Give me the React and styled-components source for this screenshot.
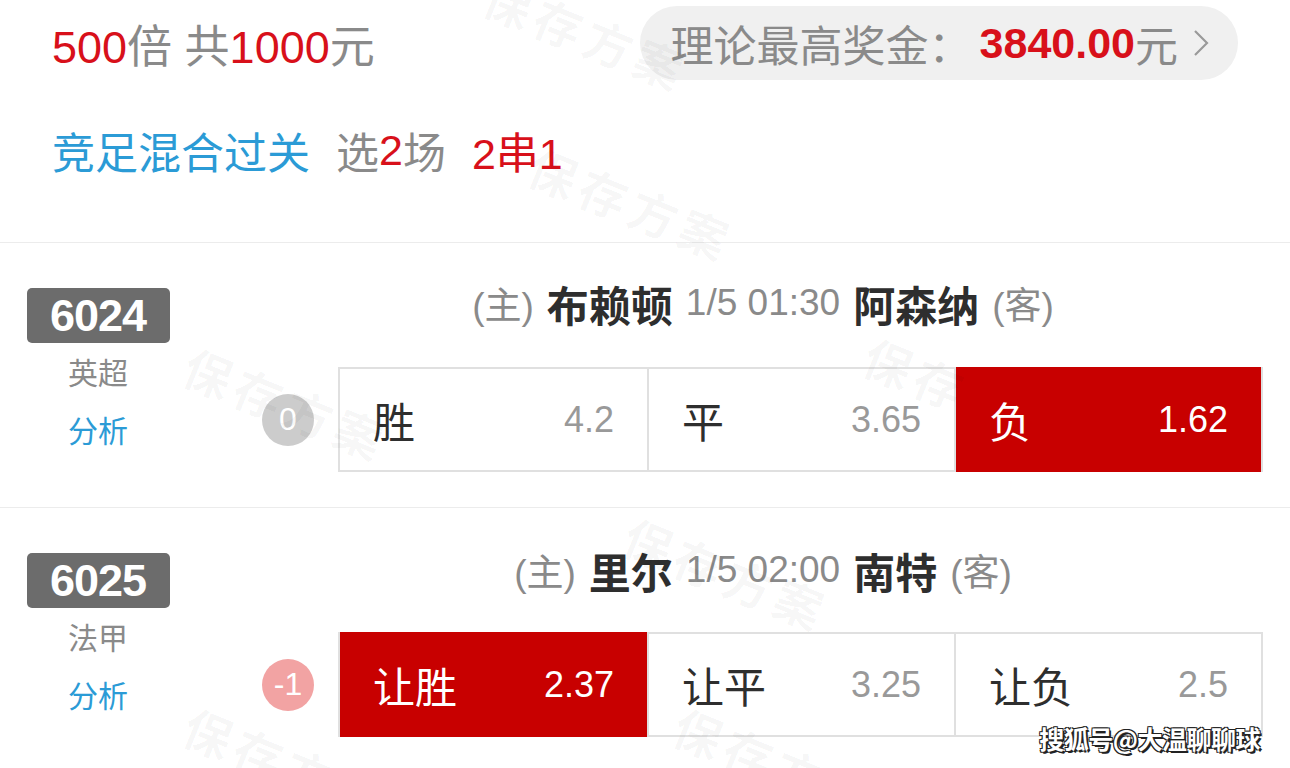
import React from 'react'
import styled, { createGlobalStyle } from 'styled-components'

const RED = '#d8101a'
const SEL = '#c80000'
const BLUE = '#2b9bd6'
const GRAY = '#8a8a8a'
const DARK = '#2e2e2e'

const GlobalStyle = createGlobalStyle`
	html, body {
		margin: 0;
		padding: 0;
		background: #fff;
	}
	body {
		font-family: 'Liberation Sans', 'Noto Sans CJK SC', sans-serif;
		color: ${DARK};
	}
`

const Page = styled.div`
	position: relative;
	width: 1290px;
	height: 768px;
	overflow: hidden;
	background: #fff;
`

const Header = styled.div`
	padding: 6px 52px 0 52px;
	border-bottom: 1px solid #ececec;
	height: 236px;
`

const TopRow = styled.div`
	display: flex;
	align-items: center;
	justify-content: space-between;
	height: 74px;
`

const Amount = styled.div`
	font-size: 45px;
	color: ${GRAY};
`

const Red = styled.span`
	color: ${RED};
	font-weight: ${({ bold }) => (bold ? 700 : 400)};
	margin-left: ${({ gap }) => gap || 0}px;
`

const Pill = styled.div`
	display: flex;
	align-items: center;
	height: 74px;
	padding: 0 28px 0 31px;
	border-radius: 37px;
	background: #f0f0f0;
	font-size: 43px;
	color: ${GRAY};
`

const Colon = styled.span`
	margin-right: 8px;
`

const Chevron = styled.svg`
	margin-left: 14px;
	width: 18px;
	height: 30px;
`

const PlayRow = styled.div`
	display: flex;
	align-items: center;
	height: 52px;
	margin-top: 44px;
	font-size: 43px;
	color: ${GRAY};
`

const Blue = styled.span`
	color: ${BLUE};
	margin-right: ${({ gap }) => gap || 0}px;
`

const Match = styled.div`
	display: flex;
	align-items: flex-start;
	padding: ${({ top }) => top}px 27px 35px 0;
	border-bottom: 1px solid #ececec;
`

const Side = styled.div`
	display: flex;
	flex-direction: column;
	align-items: center;
	width: 196px;
	padding-top: ${({ offset }) => offset}px;
`

const Badge = styled.div`
	width: 143px;
	height: 55px;
	border-radius: 5px;
	background: #6c6c6c;
	color: #fff;
	font-size: 45px;
	font-weight: 700;
	letter-spacing: -1px;
	display: flex;
	align-items: center;
	justify-content: center;
`

const League = styled.div`
	margin-top: 3px;
	height: 55px;
	line-height: 55px;
	font-size: 30px;
	color: ${({ link }) => (link ? BLUE : GRAY)};
`

const Main = styled.div`
	flex: 1;
	padding-left: 40px;
`

const Teams = styled.div`
	height: 50px;
	margin-right: -27px;
	display: flex;
	align-items: center;
	justify-content: center;
	gap: 13px;
	font-size: 37px;
	color: ${GRAY};
`

const Team = styled.span`
	font-size: 42px;
	font-weight: 700;
	color: ${DARK};
`

const OddsRow = styled.div`
	display: flex;
	align-items: center;
	margin-top: ${({ gap }) => gap}px;
`

const Handicap = styled.div`
	width: 52px;
	height: 52px;
	margin: 0 24px 0 26px;
	border-radius: 50%;
	background: ${({ minus }) => (minus ? '#f2a3a3' : '#cccccc')};
	color: #fff;
	font-size: 32px;
	display: flex;
	align-items: center;
	justify-content: center;
`

const Options = styled.div`
	flex: 1;
	display: grid;
	grid-template-columns: 1fr 1fr 1fr;
	height: 105px;
	border: 2px solid #e0e0e0;
	box-sizing: border-box;
`

const Cell = styled.div`
	display: flex;
	align-items: center;
	justify-content: space-between;
	padding: 0 33px 0 33px;
	background: ${({ on }) => (on ? SEL : '#fff')};
	border-left: ${({ first }) => (first ? 'none' : '2px solid #e0e0e0')};
	margin: ${({ on }) => (on ? '-2px 0' : '0')};
`

const Label = styled.span`
	font-size: 42px;
	color: ${({ on }) => (on ? '#fff' : DARK)};
`

const Odd = styled.span`
	font-size: 36px;
	color: ${({ on }) => (on ? '#fff' : '#999')};
`

const Mark = styled.div`
	position: absolute;
	left: ${({ x }) => x}px;
	top: ${({ y }) => y}px;
	font-family: 'Noto Sans CJK SC', sans-serif;
	font-size: 48px;
	font-weight: 700;
	color: rgba(0, 0, 0, 0.035);
	transform: rotate(22deg);
	transform-origin: left top;
	letter-spacing: 6px;
	white-space: nowrap;
	pointer-events: none;
`

const Credit = styled.div`
	position: absolute;
	right: 30px;
	bottom: 12px;
	font-family: 'Noto Sans CJK SC', sans-serif;
	font-size: 25px;
	font-weight: 700;
	color: #fff;
	letter-spacing: -0.5px;
	text-shadow: -1px -1px 0 #222, 1px -1px 0 #222, -1px 1px 0 #222, 2px 2px 0 #222;
`

const matches = [
	{
		no: '6024',
		league: '英超',
		home: '布赖顿',
		time: '1/5 01:30',
		away: '阿森纳',
		handicap: '0',
		top: 35,
		offset: 10,
		gap: 39,
		options: [
			{ label: '胜', odd: '4.2' },
			{ label: '平', odd: '3.65' },
			{ label: '负', odd: '1.62', on: true }
		]
	},
	{
		no: '6025',
		league: '法甲',
		home: '里尔',
		time: '1/5 02:00',
		away: '南特',
		handicap: '-1',
		top: 37,
		offset: 8,
		gap: 37,
		options: [
			{ label: '让胜', odd: '2.37', on: true },
			{ label: '让平', odd: '3.25' },
			{ label: '让负', odd: '2.5' }
		]
	}
]

const marks = [
	[500, -40, '保存方案'],
	[545, 130, '保存方案'],
	[200, 330, '保存方案'],
	[880, 320, '保存'],
	[640, 500, '保存方案'],
	[200, 690, '保存方案'],
	[690, 690, '保存方案']
]

const App = () => {
	const _renderMatch = (m) => (
		<Match key={m.no} top={m.top}>
			<Side offset={m.offset}>
				<Badge>{m.no}</Badge>
				<League>{m.league}</League>
				<League link>分析</League>
			</Side>
			<Main>
				<Teams>
					<span>(主)</span>
					<Team>{m.home}</Team>
					<span>{m.time}</span>
					<Team>{m.away}</Team>
					<span>(客)</span>
				</Teams>
				<OddsRow gap={m.gap}>
					<Handicap minus={m.handicap !== '0'}>{m.handicap}</Handicap>
					<Options>
						{m.options.map((o, i) => (
							<Cell key={o.label} on={o.on} first={i === 0}>
								<Label on={o.on}>{o.label}</Label>
								<Odd on={o.on}>{o.odd}</Odd>
							</Cell>
						))}
					</Options>
				</OddsRow>
			</Main>
		</Match>
	)

	return (
		<Page>
			<GlobalStyle />
			<Header>
				<TopRow>
					<Amount>
						<Red>500</Red>倍 共<Red>1000</Red>元
					</Amount>
					<Pill>
						理论最高奖金<Colon>：</Colon><Red bold>3840.00</Red>元
						<Chevron viewBox="0 0 18 30">
							<path d="M3 3 L15 15 L3 27" fill="none" stroke="#9a9a9a" strokeWidth="2.2" />
						</Chevron>
					</Pill>
				</TopRow>
				<PlayRow>
					<Blue gap={26}>竞足混合过关</Blue>
					选<Red>2</Red>场<Red gap={26}>2串1</Red>
				</PlayRow>
			</Header>
			{matches.map(_renderMatch)}
			{marks.map(([x, y, t], i) => (
				<Mark key={i} x={x} y={y}>{t}</Mark>
			))}
			<Credit>搜狐号@大温聊聊球</Credit>
		</Page>
	)
}

export default App
